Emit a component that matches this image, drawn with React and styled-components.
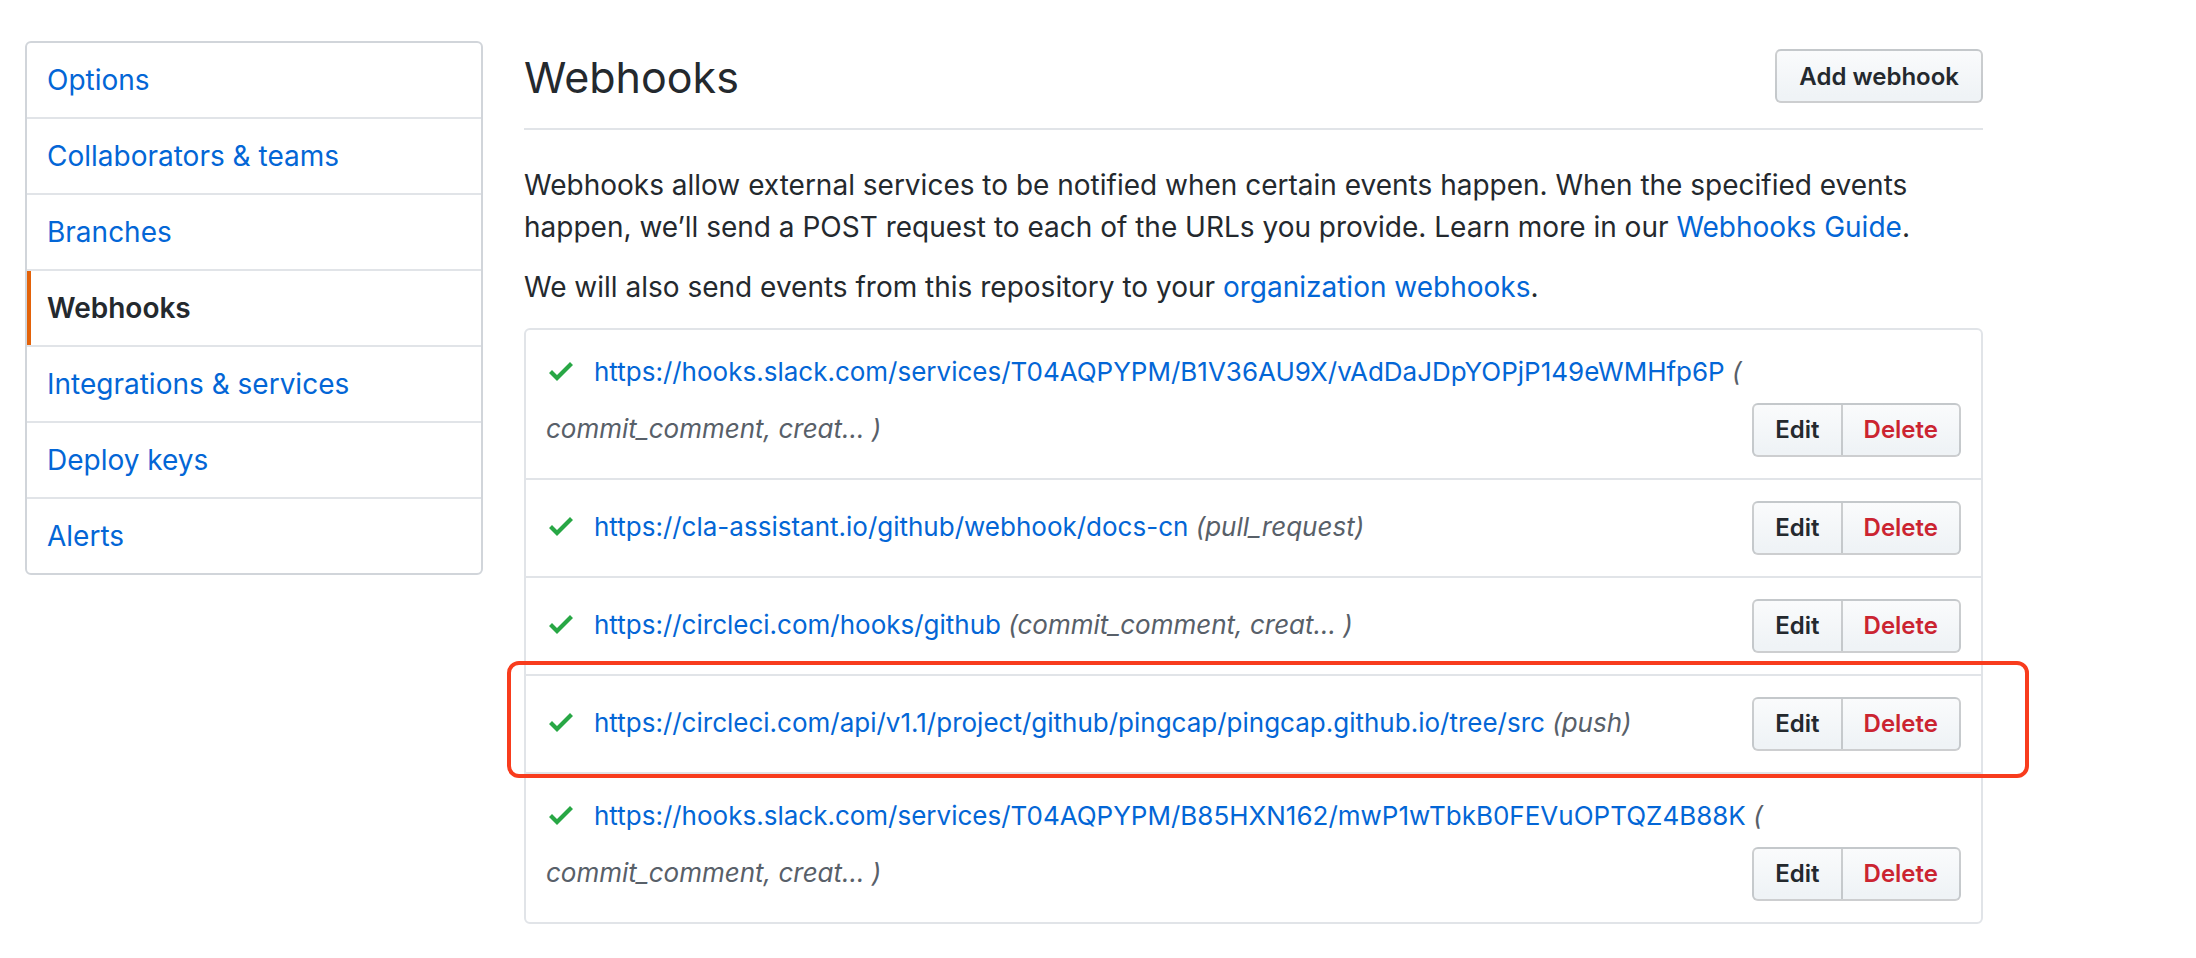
import React from 'react';
import styled, { createGlobalStyle, css } from 'styled-components';

const GlobalStyle = createGlobalStyle`
  body {
    margin: 0;
    background: #fff;
    color: #24292e;
    font-family: Inter, "Liberation Sans", Arial, sans-serif;
    font-size: 28px;
    line-height: 42px;
  }
  * { box-sizing: border-box; }
`;

const Page = styled.div`
  display: flex;
  align-items: flex-start;
  gap: 41px;
  padding: 41px 0 0 25px;
`;

const SideNav = styled.nav`
  flex: 0 0 458px;
  border: 2px solid #d1d5da;
  border-radius: 6px;
  overflow: hidden;
`;

const NavItem = styled.a`
  display: block;
  padding: 16px 20px;
  line-height: 42px;
  color: #0366d6;
  text-decoration: none;
  & + & {
    border-top: 2px solid #e1e4e8;
  }
  ${({ $active }) =>
    $active &&
    css`
      color: #24292e;
      font-weight: 600;
      box-shadow: inset 4px 0 0 #e36209;
    `}
`;

const Main = styled.main`
  flex: 0 0 1459px;
  margin-top: 7px;
`;

const Subhead = styled.div`
  display: flex;
  justify-content: space-between;
  align-items: flex-start;
  padding-bottom: 22px;
  border-bottom: 2px solid #e1e4e8;
  margin-bottom: 34px;
`;

const Title = styled.h2`
  margin: 0;
  padding-top: 2px;
  font-size: 43px;
  font-weight: 400;
  line-height: 55.5px;
`;

const Button = styled.button`
  height: 54px;
  padding: 0 21px;
  font-family: inherit;
  font-size: 24px;
  font-weight: 600;
  color: ${({ $danger }) => ($danger ? '#cb2431' : '#24292e')};
  background: linear-gradient(-180deg, #fafbfc 0%, #eff3f6 90%);
  border: 2px solid rgba(27, 31, 35, 0.2);
  border-radius: 6px;
  cursor: pointer;
`;

const AddButton = styled(Button)`
  padding: 0 22px;
  margin-top: 1px;
`;

const Text = styled.p`
  margin: 0 0 18px;
  max-width: 1459px;
`;

const Link = styled.a`
  color: #0366d6;
  text-decoration: none;
`;

const HookList = styled.div`
  border: 2px solid #e1e4e8;
  border-radius: 6px;
  margin-top: 20px;
  font-size: 26px;
`;

const HookRow = styled.div`
  position: relative;
  padding: 21px 20px;
  & + & {
    border-top: 2px solid #e1e4e8;
  }
`;

const HookLine = styled.div`
  display: flex;
  align-items: baseline;
  justify-content: space-between;
  white-space: nowrap;
`;

const FirstLine = styled.div`
  white-space: nowrap;
  margin-bottom: 10px;
`;

const Description = styled.span`
  color: #586069;
  font-style: italic;
`;

const CheckIcon = styled.svg`
  width: 24px;
  height: 32px;
  margin: 0 21px 0 3px;
  vertical-align: -6px;
  fill: #28a745;
`;

const BtnGroup = styled.div`
  display: flex;
  flex-shrink: 0;
`;

const GroupButton = styled(Button)`
  &:first-child {
    border-radius: 6px 0 0 6px;
  }
  &:last-child {
    border-left: 0;
    border-radius: 0 6px 6px 0;
  }
`;

const Highlight = styled.div`
  position: absolute;
  top: -15px;
  bottom: -6px;
  left: -19px;
  right: -48px;
  border: 4px solid #f83c1d;
  border-radius: 12px;
  pointer-events: none;
`;

const Check = () => (
  <CheckIcon viewBox="0 0 12 16" aria-hidden="true">
    <path fillRule="evenodd" d="M12 5l-8 8-4-4 1.5-1.5L4 10l6.5-6.5L12 5z" />
  </CheckIcon>
);

const Actions = () => (
  <BtnGroup>
    <GroupButton>Edit</GroupButton>
    <GroupButton $danger>Delete</GroupButton>
  </BtnGroup>
);

const navItems = [
  'Options',
  'Collaborators & teams',
  'Branches',
  'Webhooks',
  'Integrations & services',
  'Deploy keys',
  'Alerts',
];

const hooks = [
  {
    url: 'https://hooks.slack.com/services/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',
    events: 'commit_comment, creat… )',
    wrap: true,
  },
  { url: 'https://cla-assistant.io/github/webhook/docs-cn', events: '(pull_request)' },
  { url: 'https://circleci.com/hooks/github', events: '(commit_comment, creat… )' },
  {
    url: 'https://circleci.com/api/v1.1/project/github/pingcap/pingcap.github.io/tree/src',
    events: '(push)',
    marked: true,
  },
  {
    url: 'https://hooks.slack.com/services/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',
    events: 'commit_comment, creat… )',
    wrap: true,
  },
];

const Hook = ({ hook }) => {
  if (hook.wrap) {
    return (
      <HookRow>
        <FirstLine>
          <Check />
          <Link href="#">{hook.url}</Link> <Description>(</Description>
        </FirstLine>
        <HookLine>
          <Description>{hook.events}</Description>
          <Actions />
        </HookLine>
      </HookRow>
    );
  }
  return (
    <HookRow>
      <HookLine>
        <span>
          <Check />
          <Link href="#">{hook.url}</Link> <Description>{hook.events}</Description>
        </span>
        <Actions />
      </HookLine>
      {hook.marked && <Highlight />}
    </HookRow>
  );
};

const App = () => (
  <>
    <GlobalStyle />
    <Page>
      <SideNav>
        {navItems.map((item) => (
          <NavItem key={item} href="#" $active={item === 'Webhooks'}>
            {item}
          </NavItem>
        ))}
      </SideNav>
      <Main>
        <Subhead>
          <Title>Webhooks</Title>
          <AddButton>Add webhook</AddButton>
        </Subhead>
        <Text>
          Webhooks allow external services to be notified when certain events happen. When the
          specified events happen, we’ll send a POST request to each of the URLs you provide.
          Learn more in our <Link href="#">Webhooks Guide</Link>.
        </Text>
        <Text>
          We will also send events from this repository to your{' '}
          <Link href="#">organization webhooks</Link>.
        </Text>
        <HookList>
          {hooks.map((hook) => (
            <Hook key={hook.url} hook={hook} />
          ))}
        </HookList>
      </Main>
    </Page>
  </>
);

export default App;
